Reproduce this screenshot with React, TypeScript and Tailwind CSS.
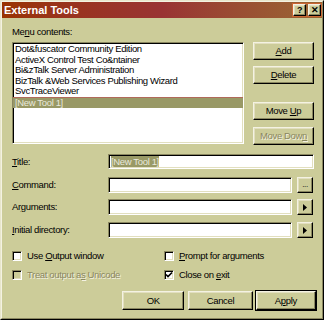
import React from "react";

const raised =
  "border border-t-[#f4f2e2] border-l-[#f4f2e2] border-r-black border-b-black shadow-[inset_-1px_-1px_0_#8a8760,inset_1px_1px_0_#e2dfbf]";
const sunken =
  "border border-t-[#8a8760] border-l-[#8a8760] border-r-white border-b-white shadow-[inset_1px_1px_0_#000,inset_-1px_-1px_0_#e2dfbf]";

function Btn({
  children,
  className = "",
  disabled,
  def,
}: {
  children: React.ReactNode;
  className?: string;
  disabled?: boolean;
  def?: boolean;
}) {
  return (
    <div
      className={`flex items-center justify-center ${def ? "outline outline-1 outline-black" : ""} ${raised} ${
        disabled ? "text-[#8a8760] [text-shadow:1px_1px_0_#f4f2e2]" : "text-black"
      } ${className}`}
    >
      <span className="whitespace-pre">{children}</span>
    </div>
  );
}

function Check({ checked, disabled }: { checked?: boolean; disabled?: boolean }) {
  return (
    <div
      className={`relative h-[10px] w-[10px] shrink-0 ${sunken} ${disabled ? "bg-[#cccc99]" : "bg-white"}`}
    >
      {checked && (
        <svg viewBox="0 0 8 8" className="absolute left-0 top-0 h-[8px] w-[8px]">
          <path d="M1 3.5 L3 5.5 L7 1.5" stroke="black" strokeWidth="1.6" fill="none" />
        </svg>
      )}
    </div>
  );
}

function Field({ label, right, top }: { label: React.ReactNode; right?: React.ReactNode; top: string }) {
  return (
    <div className={`flex items-center ${top}`}>
      <div className="w-[96px] shrink-0">{label}</div>
      <div className={`h-[16px] w-[184px] bg-white ${sunken}`} />
      {right}
    </div>
  );
}

function Arrow() {
  return (
    <Btn className="ml-[5px] h-[16px] w-[16px]">
      <svg viewBox="0 0 4 7" className="block h-[7px] w-[4px]">
        <path d="M0 0 L4 3.5 L0 7 Z" fill="black" />
      </svg>
    </Btn>
  );
}

export default function App() {
  const items = [
    "Dot&fuscator Community Edition",
    "ActiveX Control Test Co&ntainer",
    "Bi&zTalk Server Administration",
    "BizTalk &Web Services Publishing Wizard",
    "SvcTraceViewer",
  ];
  return (
    <div className="flex h-[320px] w-[324px] flex-col border border-t-[#e8e6cc] border-l-[#e8e6cc] border-r-black border-b-black bg-[#cccc99] text-[9.5px] leading-[12px] tracking-[-0.35px] text-black [font-family:'Liberation_Sans',Arial,sans-serif]">
      <div className="flex h-full flex-col border border-t-[#f4f2e2] border-l-[#f4f2e2] border-r-[#8a8760] border-b-[#8a8760]">
        {/* Title bar */}
        <div className="flex h-[16px] items-center justify-between bg-gradient-to-r from-[#993300] via-[#993333] to-[#996633] pl-[2px] pr-[1px]">
          <span className="text-[11px] font-bold tracking-normal text-white">External Tools</span>
          <div className="flex gap-[2px] outline outline-1 outline-[#cc6633]">
            <Btn className="h-[12px] w-[13px] bg-[#cccc99] text-[9px] font-bold">?</Btn>
            <Btn className="h-[12px] w-[13px] bg-[#cccc99] text-[9px] font-bold">✕</Btn>
          </div>
        </div>

        <div className="flex flex-col pl-[10px] pr-[6px]">
          <div className="mt-[8px]">
            Me<u>n</u>u contents:
          </div>

          <div className="mt-[4px] flex">
            <div className={`h-[102px] w-[232px] overflow-hidden bg-white pt-[1px] ${sunken}`}>
              {items.map((t) => (
                <div key={t} className="h-[10.6px] whitespace-nowrap pl-[2px] leading-[10.6px]">
                  {t}
                </div>
              ))}
              <div className="h-[10.6px] border-t border-[#b06a5a] bg-[#999966] pl-[2px] leading-[9.6px] text-[#e8e8dc]">
                [New Tool 1]
              </div>
            </div>
            <div className="ml-[9px] flex w-[61px] flex-col">
              <Btn className="h-[18px]">
                <u>A</u>dd
              </Btn>
              <Btn className="mt-[6px] h-[18px]">
                <u>D</u>elete
              </Btn>
              <Btn className="mt-[18px] h-[18px]">
                Move <u>U</u>p
              </Btn>
              <Btn disabled className="mt-[7px] h-[18px]">
                Move Dow<u>n</u>
              </Btn>
            </div>
          </div>

          <div className="mt-[9px] flex items-center">
            <div className="w-[96px] shrink-0">
              <u>T</u>itle:
            </div>
            <div className={`flex h-[15px] w-[206px] items-center bg-white pl-[2px] ${sunken}`}>
              <span className="bg-[#999966] leading-[11px] text-[#e8e8dc]">[New Tool 1]</span>
            </div>
          </div>

          <Field
            top="mt-[8px]"
            label={
              <>
                <u>C</u>ommand:
              </>
            }
            right={
              <Btn className="ml-[5px] h-[16px] w-[16px] text-[8px] leading-[8px]">...</Btn>
            }
          />
          <Field
            top="mt-[6px]"
            label={
              <>
                Ar<u>g</u>uments:
              </>
            }
            right={<Arrow />}
          />
          <Field
            top="mt-[7px]"
            label={
              <>
                <u>I</u>nitial directory:
              </>
            }
            right={<Arrow />}
          />

          <div className="mt-[12px] flex">
            <div className="flex w-[152px] items-center gap-[5px]">
              <Check />
              <span>
                Use <u>O</u>utput window
              </span>
            </div>
            <div className="flex items-center gap-[5px]">
              <Check />
              <span>
                <u>P</u>rompt for arguments
              </span>
            </div>
          </div>
          <div className="mt-[7px] flex">
            <div className="flex w-[152px] items-center gap-[5px] text-[#8a8760] [text-shadow:1px_1px_0_#f4f2e2]">
              <Check disabled />
              <span>
                Treat output a<u>s</u> Unicode
              </span>
            </div>
            <div className="flex items-center gap-[5px]">
              <Check checked />
              <span>
                Close on <u>e</u>xit
              </span>
            </div>
          </div>

          <div className="mt-[10px] flex pl-[110px]">
            <Btn className="h-[19px] w-[63px]">OK</Btn>
            <Btn className="ml-[4px] h-[19px] w-[65px]">Cancel</Btn>
            <Btn def className="ml-[3px] h-[19px] w-[61px]">
              A<u>p</u>ply
            </Btn>
          </div>
        </div>
      </div>
    </div>
  );
}
